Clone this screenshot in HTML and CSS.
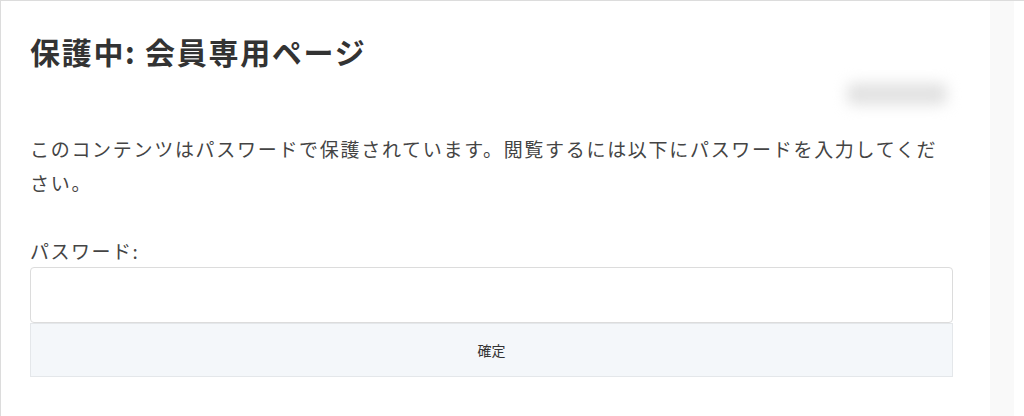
FILE: index.html
```html
<!DOCTYPE html>
<html lang="ja">
<head>
<meta charset="utf-8">
<title>保護中: 会員専用ページ</title>
<link rel="stylesheet" href="styles.css">
</head>
<body>
<div class="frame">
  <main class="content">
    <h1 class="title">保護中: 会員専用ページ</h1>
    <div class="meta"><span class="meta-blur"></span></div>
    <form class="pw-form">
      <p class="lead">このコンテンツはパスワードで保護されています。閲覧するには以下にパスワードを入力してください。</p>
      <label class="pw-label" for="pw">パスワード:</label>
      <input class="pw-input" id="pw" type="password">
      <button class="pw-submit" type="button">確定</button>
    </form>
  </main>
  <div class="strip"></div>
</div>
</body>
</html>
```

FILE: styles.css
```css
html, body {
  margin: 0;
  padding: 0;
  background: #fff;
}
body {
  font-family: "Noto Sans CJK JP", "Noto Sans", sans-serif;
  color: #444;
}
.frame {
  display: flex;
  height: 416px;
  box-sizing: border-box;
  border-top: 1px solid #dcdcdc;
  border-left: 1px solid #dcdcdc;
}
.content {
  width: 923px;
  padding-left: 29px;
}
.title {
  margin: 28px 0 0;
  font-size: 30px;
  line-height: 44px;
  font-weight: 700;
  letter-spacing: 1.7px;
  color: #333;
}
.meta {
  display: flex;
  justify-content: flex-end;
  height: 42px;
  align-items: center;
  padding-right: 6px;
}
.meta-blur {
  display: block;
  width: 100px;
  height: 22px;
  background: #e2e2e2;
  border-radius: 6px;
  filter: blur(7px);
}
.pw-form {
  display: flex;
  flex-direction: column;
}
.lead {
  margin: 17px 0 0;
  font-size: 19px;
  line-height: 34px;
  letter-spacing: 1.7px;
  color: #444;
}
.pw-label {
  margin-top: 39px;
  font-size: 19px;
  line-height: 24px;
  letter-spacing: 1.5px;
  color: #444;
}
.pw-input {
  margin-top: 4px;
  height: 56px;
  box-sizing: border-box;
  border: 1px solid #dcdcdc;
  border-radius: 4px;
  background: #fff;
  font-size: 16px;
  padding: 0 12px;
}
.pw-submit {
  height: 54px;
  box-sizing: border-box;
  border: 1px solid #e4e7ea;
  border-radius: 0;
  background: #f4f7fa;
  font-family: "Noto Sans CJK JP", sans-serif;
  font-size: 14px;
  color: #333;
}
.strip {
  width: 24px;
  margin-left: auto;
  margin-right: 10px;
  background: #f9f9f9;
}
```
